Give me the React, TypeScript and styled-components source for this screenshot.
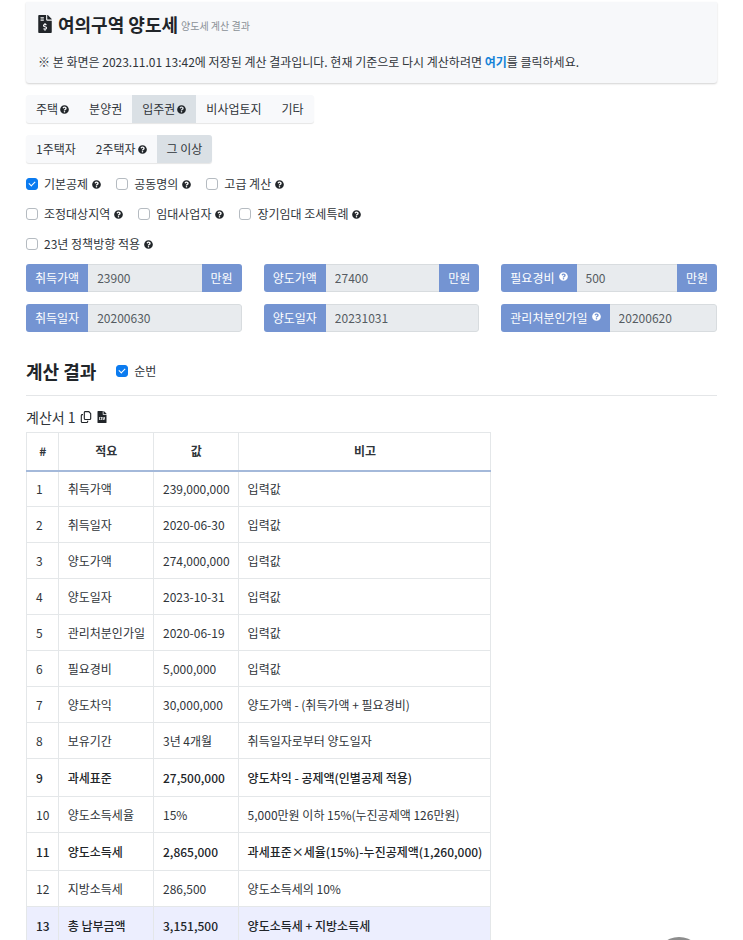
import React from "react";
import styled, { createGlobalStyle, css } from "styled-components";
import { FaFileInvoiceDollar, FaQuestionCircle, FaFileCsv } from "react-icons/fa";
import { FaRegCopy } from "react-icons/fa6";

const GlobalStyle = createGlobalStyle`
  *, *::before, *::after { box-sizing: border-box; }
  html { scrollbar-width: none; }
  body {
    margin: 0;
    background: #fff;
    color: #30353a;
    font-family: "Noto Sans CJK KR", "Noto Sans", sans-serif;
    font-size: 12px;
    line-height: 18px;
  }
  h1, h2, h3, p { margin: 0; }
  button, input { font: inherit; color: inherit; }
`;

const Page = styled.main`
  padding: 2px 26px 24px;
`;

const Banner = styled.header`
  display: flex;
  flex-direction: column;
  gap: 15px;
  padding: 9px 12px 11px;
  background: #f7f8fa;
  border-radius: 0 0 3px 3px;
  box-shadow: 0 1px 2px rgba(0, 0, 0, 0.18);
`;

const Title = styled.h1`
  display: flex;
  align-items: center;
  font-size: 18px;
  line-height: 26px;
  font-weight: 700;
  color: #212529;

  svg { width: 14px; height: 18px; margin-right: 6px; }
`;

const Subtitle = styled.small`
  margin: 4px 0 0 3px;
  font-size: 10px;
  line-height: 16px;
  font-weight: 400;
  color: #8b9197;
`;

const Notice = styled.p`
  line-height: 20px;
`;

const Link = styled.a`
  color: #1583d8;
  font-weight: 700;
  text-decoration: none;
`;

const Tabs = styled.div`
  display: flex;
  width: fit-content;
  margin-top: 12px;
  border-radius: 3px;
  overflow: hidden;
  background: #f8f9fb;
  box-shadow: 0 1px 1px rgba(0, 0, 0, 0.1);
`;

const Tab = styled.button<{ $active?: boolean }>`
  display: flex;
  align-items: center;
  gap: 2px;
  height: 28px;
  padding: 0 10px;
  border: 0;
  white-space: nowrap;
  background: ${(p) => (p.$active ? "#dae0e5" : "transparent")};
`;

const Help = styled(FaQuestionCircle)<{ $light?: boolean }>`
  flex: none;
  width: 9px;
  height: 9px;
  color: ${(p) => (p.$light ? "#fff" : "#212529")};
  ${(p) => p.$light && css`margin-bottom: 4px;`}
`;

const Options = styled.div`
  display: flex;
  flex-direction: column;
  gap: 12px;
  margin-top: 12px;
`;

const OptionRow = styled.div`
  display: flex;
  flex-wrap: wrap;
  gap: 15px;
`;

const CheckLabel = styled.label`
  display: flex;
  align-items: center;
  gap: 4px;
  white-space: nowrap;
`;

const Checkbox = styled.input`
  appearance: none;
  display: grid;
  place-items: center;
  width: 12px;
  height: 12px;
  margin: 0 2px 0 0;
  border: 1px solid #b5bbc1;
  border-radius: 3px;
  background: #fff;

  &:checked {
    border-color: #0b7bf0;
    background: #0b7bf0;
  }
  &:checked::after {
    content: "";
    width: 6px;
    height: 4px;
    margin-bottom: 2px;
    border: solid #fff;
    border-width: 0 0 1px 1px;
    rotate: -45deg;
  }
`;

const Fields = styled.div`
  display: grid;
  grid-template-columns: repeat(3, minmax(0, 1fr));
  gap: 12px 22px;
  margin-top: 11px;
`;

const Group = styled.div`
  display: flex;
  height: 28px;
  border-radius: 3px;
  overflow: hidden;
`;

const Addon = styled.label`
  display: flex;
  flex: none;
  align-items: center;
  gap: 4px;
  padding: 0 9px;
  color: #fff;
  background: #7494d2;
`;

const Field = styled.input`
  flex: 1;
  width: 0;
  min-width: 0;
  padding: 0 9px;
  border: 1px solid #d8dcdf;
  border-left: 0;
  border-radius: 0 3px 3px 0;
  color: #555b61;
  background: #e8ebee;

  &:not(:last-child) { border-right: 0; border-radius: 0; }
`;

const ResultHead = styled.div`
  display: flex;
  align-items: center;
  gap: 20px;
  margin-top: 23px;
  padding-bottom: 8px;
  border-bottom: 1px solid #e4e6e8;
`;

const ResultTitle = styled.h2`
  font-size: 18px;
  line-height: 32px;
  font-weight: 700;
  color: #212529;
`;

const SheetHead = styled.div`
  display: flex;
  align-items: center;
  gap: 4px;
  margin-top: 9px;
`;

const SheetTitle = styled.h3`
  font-size: 14px;
  line-height: 24px;
  font-weight: 400;
`;

const IconButton = styled.button`
  display: flex;
  padding: 0;
  border: 0;
  background: none;
  color: #212529;
`;

const Sheet = styled.table`
  margin-top: 3px;
  border-collapse: collapse;
  white-space: nowrap;
`;

const HeadCell = styled.th`
  height: 38px;
  padding: 0 8px 0 9px;
  border: 1px solid #e4e7e9;
  border-bottom: 2px solid #a4b9da;
  font-weight: 700;
`;

const Cell = styled.td`
  padding: 1px 8px 0 9px;
  border: 1px solid #e4e7e9;
`;

const Row = styled.tr<{ $strong?: boolean; $total?: boolean }>`
  height: ${(p) => (p.$strong || p.$total ? 38 : 36)}px;
  font-weight: ${(p) => (p.$strong || p.$total ? 500 : 400)};
  color: ${(p) => (p.$strong || p.$total ? "#212529" : "inherit")};
  background: ${(p) => (p.$total ? "#eceefe" : "transparent")};
`;

const FloatingButton = styled.button`
  position: fixed;
  right: 40px;
  bottom: -45px;
  width: 48px;
  height: 48px;
  border: 0;
  border-radius: 50%;
  background: #8d8d8d;
`;

type Choice = { text: string; help?: boolean; on?: boolean };

const propertyTabs: Choice[] = [
  { text: "주택", help: true },
  { text: "분양권" },
  { text: "입주권", help: true, on: true },
  { text: "비사업토지" },
  { text: "기타" },
];

const ownerTabs: Choice[] = [
  { text: "1주택자" },
  { text: "2주택자", help: true },
  { text: "그 이상", on: true },
];

const optionRows: Choice[][] = [
  [
    { text: "기본공제", help: true, on: true },
    { text: "공동명의", help: true },
    { text: "고급 계산", help: true },
  ],
  [
    { text: "조정대상지역", help: true },
    { text: "임대사업자", help: true },
    { text: "장기임대 조세특례", help: true },
  ],
  [{ text: "23년 정책방향 적용", help: true }],
];

const fields = [
  { id: "buy-price", label: "취득가액", value: "23900", unit: "만원" },
  { id: "sell-price", label: "양도가액", value: "27400", unit: "만원" },
  { id: "expense", label: "필요경비", value: "500", unit: "만원", help: true },
  { id: "buy-date", label: "취득일자", value: "20200630" },
  { id: "sell-date", label: "양도일자", value: "20231031" },
  { id: "approval-date", label: "관리처분인가일", value: "20200620", help: true },
];

const rows: { cells: [string, string, string]; strong?: boolean; total?: boolean }[] = [
  { cells: ["취득가액", "239,000,000", "입력값"] },
  { cells: ["취득일자", "2020-06-30", "입력값"] },
  { cells: ["양도가액", "274,000,000", "입력값"] },
  { cells: ["양도일자", "2023-10-31", "입력값"] },
  { cells: ["관리처분인가일", "2020-06-19", "입력값"] },
  { cells: ["필요경비", "5,000,000", "입력값"] },
  { cells: ["양도차익", "30,000,000", "양도가액 - (취득가액 + 필요경비)"] },
  { cells: ["보유기간", "3년 4개월", "취득일자로부터 양도일자"] },
  { cells: ["과세표준", "27,500,000", "양도차익 - 공제액(인별공제 적용)"], strong: true },
  { cells: ["양도소득세율", "15%", "5,000만원 이하 15%(누진공제액 126만원)"] },
  { cells: ["양도소득세", "2,865,000", "과세표준×세율(15%)-누진공제액(1,260,000)"], strong: true },
  { cells: ["지방소득세", "286,500", "양도소득세의 10%"] },
  { cells: ["총 납부금액", "3,151,500", "양도소득세 + 지방소득세"], total: true },
];

function TabBar({ items }: { items: Choice[] }) {
  return (
    <Tabs>
      {items.map((t) => (
        <Tab key={t.text} type="button" $active={t.on} aria-pressed={!!t.on}>
          {t.text}
          {t.help && <Help />}
        </Tab>
      ))}
    </Tabs>
  );
}

function Check({ text, help, on }: Choice) {
  return (
    <CheckLabel>
      <Checkbox type="checkbox" defaultChecked={on} />
      {text}
      {help && <Help />}
    </CheckLabel>
  );
}

export default function App() {
  return (
    <>
      <GlobalStyle />
      <Page>
        <Banner>
          <Title>
            <FaFileInvoiceDollar />
            여의구역 양도세
            <Subtitle>양도세 계산 결과</Subtitle>
          </Title>
          <Notice>
            ※ 본 화면은 2023.11.01 13:42에 저장된 계산 결과입니다. 현재 기준으로 다시 계산하려면{" "}
            <Link href="#recalculate">여기</Link>를 클릭하세요.
          </Notice>
        </Banner>

        <TabBar items={propertyTabs} />
        <TabBar items={ownerTabs} />

        <Options>
          {optionRows.map((row) => (
            <OptionRow key={row[0].text}>
              {row.map((o) => (
                <Check key={o.text} {...o} />
              ))}
            </OptionRow>
          ))}
        </Options>

        <Fields>
          {fields.map((f) => (
            <Group key={f.id}>
              <Addon htmlFor={f.id}>
                {f.label}
                {f.help && <Help $light />}
              </Addon>
              <Field id={f.id} defaultValue={f.value} readOnly />
              {f.unit && <Addon as="span">{f.unit}</Addon>}
            </Group>
          ))}
        </Fields>

        <ResultHead>
          <ResultTitle>계산 결과</ResultTitle>
          <Check text="순번" on />
        </ResultHead>

        <SheetHead>
          <SheetTitle>계산서 1</SheetTitle>
          <IconButton type="button" aria-label="복사">
            <FaRegCopy size={12} />
          </IconButton>
          <IconButton type="button" aria-label="CSV 저장">
            <FaFileCsv size={12} />
          </IconButton>
        </SheetHead>

        <Sheet>
          <thead>
            <tr>
              <HeadCell>#</HeadCell>
              <HeadCell>적요</HeadCell>
              <HeadCell>값</HeadCell>
              <HeadCell>비고</HeadCell>
            </tr>
          </thead>
          <tbody>
            {rows.map((r, i) => (
              <Row key={r.cells[0]} $strong={r.strong} $total={r.total}>
                <Cell>{i + 1}</Cell>
                {r.cells.map((c, j) => (
                  <Cell key={j}>{c}</Cell>
                ))}
              </Row>
            ))}
          </tbody>
        </Sheet>
      </Page>
      <FloatingButton type="button" aria-label="맨 위로" />
    </>
  );
}
